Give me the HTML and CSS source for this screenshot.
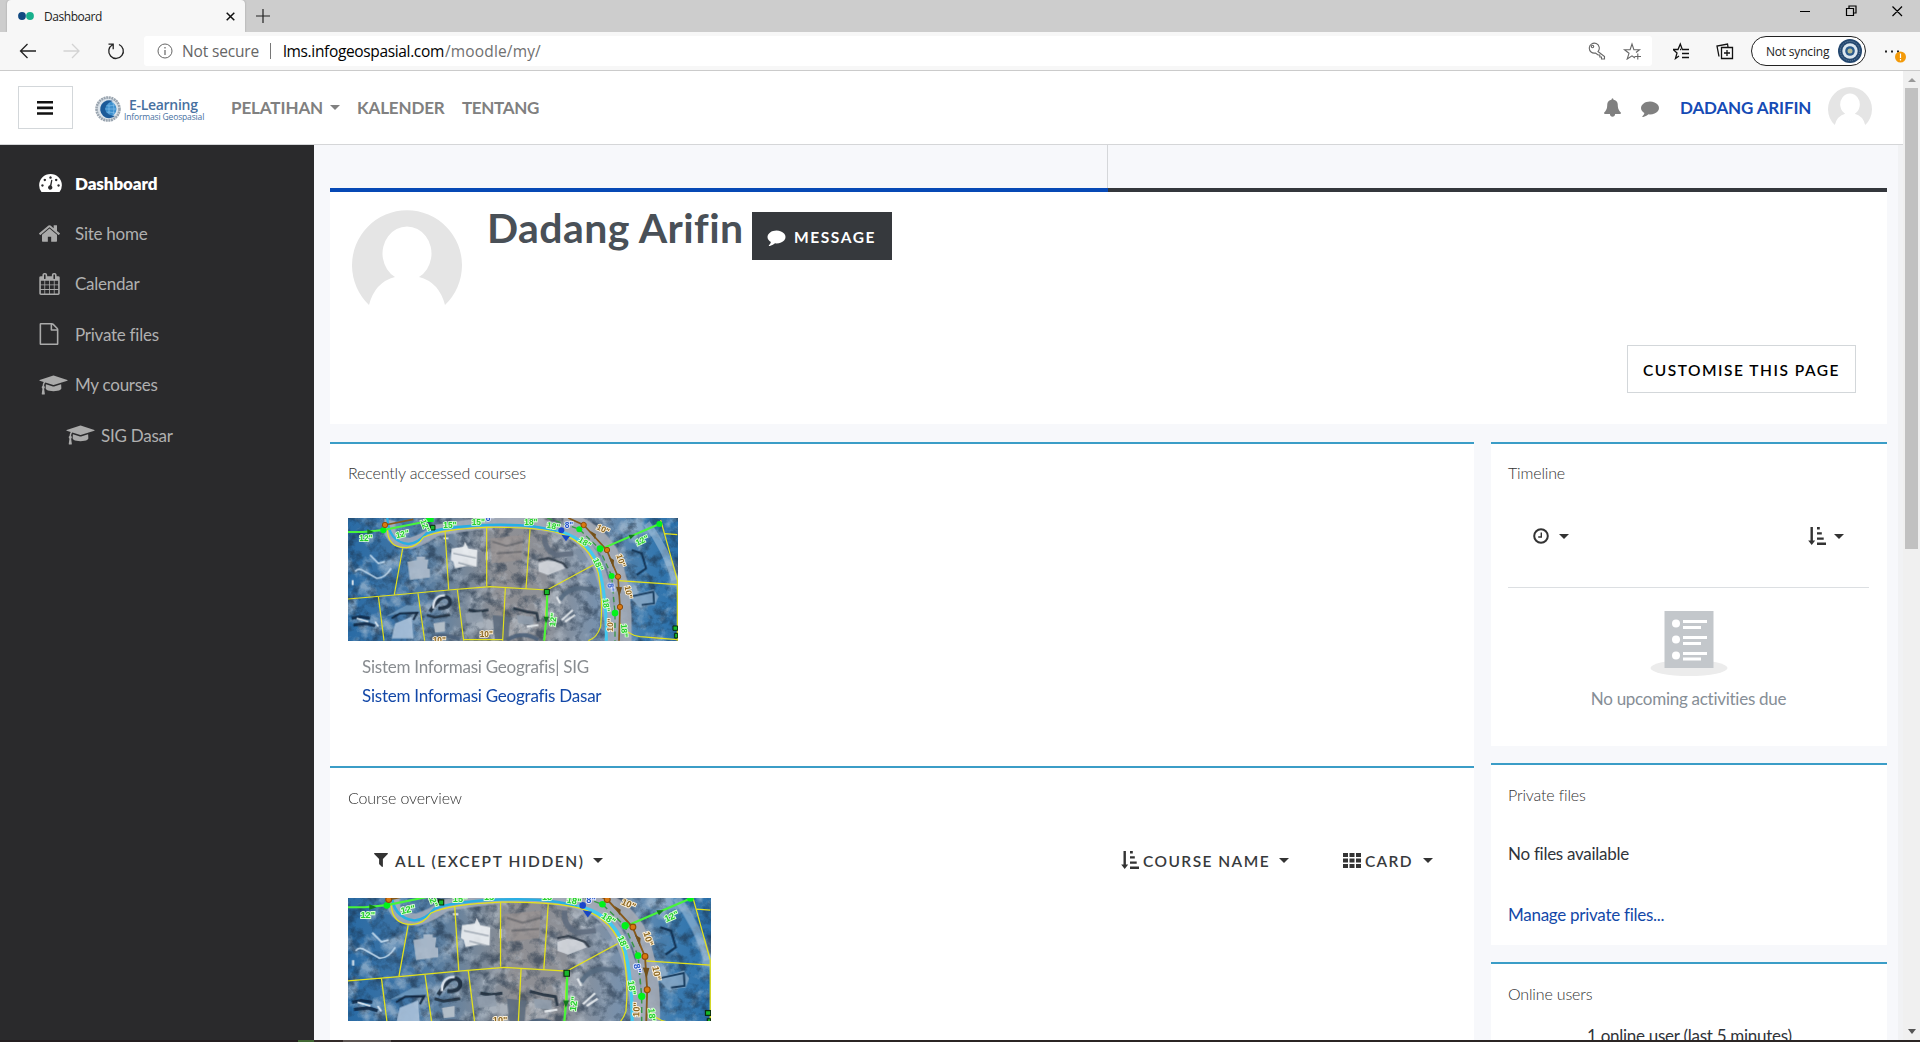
FILE: index.html
```html
<!DOCTYPE html>
<html lang="en">
<head>
<meta charset="utf-8">
<title>Dashboard</title>
<link rel="stylesheet" href="styles.css">
</head>
<body>
<svg class="defs" aria-hidden="true">
  <defs>
    <symbol id="cap" viewBox="0 0 2304 1792"><path d="M1774 836l18 316q4 69-82 128t-235 93.500-323 34.500-323-34.500-235-93.500-82-128l18-316 574 181q22 7 48 7t48-7zm530-324q0 23-22 31l-1120 352q-4 1-10 1t-10-1l-652-206q-43 34-71 111.500t-34 178.500q63 36 63 109 0 69-58 107l58 433q2 14-8 25-9 11-24 11h-192q-15 0-24-11-10-11-8-25l58-433q-58-38-58-107 0-73 65-111 11-207 98-330l-333-104q-22-8-22-31t22-31l1120-352q4-1 10-1t10 1l1120 352q22 8 22 31z"/></symbol>
    <symbol id="comment" viewBox="0 0 1792 1792"><path d="M1792 896q0 174-120 321.500t-326 233-450 85.500q-70 0-145-8-198 175-460 242-49 14-114 22-17 2-30.500-9t-17.500-29v-1q-3-4-.5-12t2-10 4.500-9.500l6-9 7-8.500 8-9q7-8 31-34.500t34.500-38 31-39.500 32.500-51 27-59 26-76q-157-89-247.500-220t-90.500-281q0-130 71-248.500t191-204.500 286-136.500 348-50.500q244 0 450 85.500t326 233 120 321.500z"/></symbol>
    <symbol id="sort" viewBox="0 0 18 18"><path d="M2.500 0h2.400v13.500h2.300L3.700 18 .2 13.500h2.300zM9 0h2.800v2.400H9zM9 5.200h4.800v2.400H9zM9 10.400h6.700v2.400H9zM9 15.600h9V18H9z"/></symbol>
    <symbol id="avatar" viewBox="0 0 110 110"><path d="M17 95A55 55 0 1 1 93 95Q87 72 67 67A24.500 27 0 1 0 43 67Q23 72 17 95z" fill="#e5e5e5"/></symbol>
    <linearGradient id="mapbase" x1="0" x2="1" y1="0" y2="0">
      <stop offset="0" stop-color="#296ba5"/><stop offset=".17" stop-color="#4175a5"/><stop offset=".33" stop-color="#72869b"/><stop offset=".46" stop-color="#8f8f93"/><stop offset=".6" stop-color="#8d9097"/><stop offset=".78" stop-color="#7491b0"/><stop offset=".9" stop-color="#3b7bb0"/><stop offset="1" stop-color="#2a70ab"/>
    </linearGradient>
    <filter id="dark" x="0" y="0" width="100%" height="100%" color-interpolation-filters="sRGB"><feTurbulence type="fractalNoise" baseFrequency=".09" numOctaves="5" seed="7"/><feColorMatrix values="0 0 0 0 .1  0 0 0 0 .17  0 0 0 0 .25  3.200 0 0 0 -1.450"/></filter>
    <filter id="light" x="0" y="0" width="100%" height="100%" color-interpolation-filters="sRGB"><feTurbulence type="fractalNoise" baseFrequency=".05" numOctaves="5" seed="21"/><feColorMatrix values="0 0 0 0 .8  0 0 0 0 .84  0 0 0 0 .88  0 4 0 0 -1.900"/></filter>
    <filter id="soft"><feGaussianBlur stdDeviation="2"/></filter>
    <symbol id="map" viewBox="0 0 330 123">
      <rect width="330" height="123" fill="url(#mapbase)"/>
      <rect width="330" height="123" filter="url(#light)" opacity=".5"/>
      <rect width="330" height="123" filter="url(#dark)" opacity=".55"/>
      <g transform="scale(.333333) translate(-54 -54)" fill="none">
        <g filter="url(#soft)" opacity=".88">
          <path d="M180 60Q165 125 240 130Q280 120 320 90L480 66Q650 62 730 105Q800 150 830 280L850 430" stroke="#a4adbc" stroke-width="34"/>
          <path d="M700 60Q790 80 840 160Q875 240 880 350L880 425" stroke="#a7acb7" stroke-width="50"/>
          <path d="M645 105Q640 150 680 165L730 160" stroke="#5e6c7e" stroke-width="15"/>
          <path d="M950 70Q1010 150 1035 240" stroke="#9cbcd8" stroke-width="22" opacity=".7"/>
          <path d="M690 300Q720 250 790 270" stroke="#566b80" stroke-width="13"/>
          <path d="M300 335Q340 270 360 300Q365 325 325 325" stroke="#182738" stroke-width="11"/>
          <path d="M310 325Q310 285 345 286" stroke="#e9eef5" stroke-width="7"/>
          <path d="M165 350L230 315L270 318L272 340L215 338z" fill="#6f9abf"/>
          <path d="M195 370L245 350L250 415L185 415z" fill="#adc4dc"/>
          <path d="M185 355L210 340L262 338L250 360" stroke="#10233a" stroke-width="6"/>
          <path d="M232 185L260 180V170H285V178L295 178L292 205L300 207V232L240 240z" fill="#b2bfcd"/>
          <path d="M365 145L400 140L405 125L415 145L442 150L440 200L415 197L375 205L370 185L362 180z" fill="#f2f4f6"/>
          <path d="M370 160L438 174M385 188L430 200" stroke="#a9b1ba" stroke-width="4"/>
          <path d="M480 115L580 105L575 180L485 190z" fill="#9b9492" opacity=".8"/>
          <path d="M488 125L530 138L580 125M500 160L575 155" stroke="#5e6064" stroke-width="6" opacity=".7"/>
          <path d="M625 190L650 182L690 185L705 205L655 225L625 215z" fill="#d5d9df"/>
          <path d="M625 180L655 174L700 190L712 205" stroke="#303b48" stroke-width="6"/>
          <path d="M75 215Q85 200 105 215L140 235Q165 235 183 205M120 165L145 190L165 185" stroke="#c8def0" stroke-width="5"/>
          <path d="M65 355L90 350L120 355M70 375L110 370L135 378" stroke="#0c2744" stroke-width="9"/>
          <path d="M80 355L115 365M135 365L145 380" stroke="#eaf2f8" stroke-width="5"/>
          <path d="M890 185L930 175L935 205z" fill="#487fae"/>
          <path d="M905 150L935 160L948 205L920 225" stroke="#102c4b" stroke-width="6"/>
          <path d="M900 290L970 268L985 290L975 315L925 320z" fill="#83a7c6"/>
          <path d="M900 290L970 275L972 310L935 315" stroke="#123252" stroke-width="5"/>
          <path d="M310 370L345 365L345 395L315 398z" fill="#bec6ce"/>
          <path d="M290 345L315 352L360 345M415 330L445 335L475 330M550 325L590 335L620 340L625 365" stroke="#202f3e" stroke-width="8"/>
          <path d="M405 340L455 335L460 365L410 370zM560 345L610 350V375L565 370z" fill="#929fad"/>
          <path d="M487 345L540 350L535 422L495 422z" fill="#5d6c7e"/>
          <path d="M695 360L728 330M705 365L735 345M590 380L625 375M680 290L690 310M340 115H355M68 240V255M470 155V180" stroke="#edf1f4" stroke-width="6"/>
          <path d="M530 420Q580 390 625 420M300 418Q330 395 390 418" stroke="#4c6079" stroke-width="12"/>
        </g>
        <path d="M172 54Q175 125 235 132Q265 130 290 100Q340 80 470 75Q610 70 680 95" stroke="#28aee4" stroke-width="7"/>
        <path d="M680 92Q760 110 795 175Q830 250 829 422" stroke="#43c9f0" stroke-width="9"/>
        <g stroke="#e4e21b" stroke-width="3.500">
          <path d="M172 90Q175 145 230 143Q262 140 280 112Q330 88 470 82Q620 80 690 100Q780 130 805 220Q820 300 812 380Q800 415 775 422"/>
          <path d="M345 93L356 268M470 83V258M600 88L588 266M218 145L193 284M54 297L193 285L356 270L480 260L651 270L790 195M145 288L162 422M264 280L284 422M382 268L401 422M526 264L518 422M651 270L644 422M865 242L1042 254M992 60L1042 240V422M1005 101L1042 104M870 370Q890 405 930 410L1042 419M400 419H518"/>
        </g>
        <path d="M54 96H100L160 90L270 68L304 60M652 275L650 350L642 422M818 145L988 72" stroke="#48f53b" stroke-width="6"/>
        <path d="M652 54L748 88L808 146L845 228L855 340V422" stroke="#389646" stroke-width="4" stroke-dasharray="16 10"/>
        <path d="M165 75L250 58M715 54L761 75L830 150L864 230L870 321L867 422" stroke="#86591a" stroke-width="5"/>
        <path d="M780 92L798 103L795 118zM836 170L852 180L850 204zM858 260L876 262L868 290z" fill="#72501a"/>
        <path d="M112 88L132 96L112 103zM895 104L915 104L902 118zM641 350H657L648 370z" fill="#13791d"/>
        <g fill="#00f31b"><circle cx="160" cy="91" r="9"/><circle cx="748" cy="88" r="9"/><circle cx="810" cy="146" r="10"/><circle cx="845" cy="228" r="9"/><circle cx="855" cy="339" r="10"/><circle cx="988" cy="72" r="9"/><path d="M288 50H311V66H288z"/></g>
        <g fill="#d97810" stroke="#8d4b08" stroke-width="3"><circle cx="165" cy="75" r="8"/><circle cx="761" cy="75" r="8"/><circle cx="831" cy="150" r="8"/><circle cx="864" cy="230" r="8"/><circle cx="870" cy="321" r="8"/></g>
        <g fill="#17b82a" stroke="#092b0b" stroke-width="3"><path d="M301 76H315V90H301zM643 268H658V284H643zM1029 378H1043V391H1029zM1034 400H1043V414H1034z"/></g>
        <circle cx="694" cy="91" r="9" fill="#1945cc"/><path d="M694 104L720 108L708 124z" fill="#1745c4"/>
        <g class="maplabels" fill="#25ce2c" stroke="#d9ffd5" stroke-width="5" paint-order="stroke">
          <text x="88" y="124">12"</text><text x="197" y="112" transform="rotate(-12 210 100)">12"</text><text x="340" y="83">15"</text><text x="425" y="75">15"</text><text x="583" y="75">18"</text><text x="650" y="86" transform="rotate(12 665 80)">18"</text><text x="744" y="132" transform="rotate(32 758 127)">18"</text><text x="785" y="196" transform="rotate(65 800 190)">18"</text><text x="812" y="315" transform="rotate(82 825 309)">18"</text><text x="917" y="132" transform="rotate(-25 931 123)">12"</text><text x="656" y="374" transform="rotate(-82 669 366)">12"</text><text x="865" y="391" transform="rotate(85 879 386)">18"</text><text x="268" y="79" transform="rotate(70 282 72)">12"</text>
          <g fill="#8a6520" stroke="#fff1d7"><text x="799" y="94" transform="rotate(25 814 88)">10"</text><text x="856" y="184" transform="rotate(72 870 177)">10"</text><text x="880" y="277" transform="rotate(80 893 270)">10"</text><text x="828" y="386" transform="rotate(-88 843 380)">10"</text><text x="449" y="412">10"</text><text x="308" y="428">10"</text></g>
          <g fill="#2757c9" stroke="#e4eaff"><text x="704" y="84">8"</text><text x="829" y="270" transform="rotate(80 842 263)">8"</text><text x="467" y="64">8"</text></g>
        </g>
      </g>
    </symbol>
  </defs>
</svg>

<div class="window">
  <header class="tabstrip">
    <div class="tab">
      <svg class="favicon" viewBox="0 0 16 10"><circle cx="4" cy="5" r="3.900" fill="#114a82"/><circle cx="12" cy="5" r="3.900" fill="#17b08c"/></svg>
      <span class="tab-title">Dashboard</span>
      <svg class="tab-close" viewBox="0 0 9 9"><path d="M.7.7l7.600 7.600M8.300.7L.7 8.300" stroke="#111" stroke-width="1.500"/></svg>
    </div>
    <svg class="newtab" viewBox="0 0 14 14"><path d="M7 0v14M0 7h14" stroke="#222" stroke-width="1.200"/></svg>
    <svg class="winbtns" viewBox="0 0 104 12"><path d="M0 6.500h10M46.500 3.500h7v7h-7zM49 3V1h7v7h-2M92.500 1.500l9.500 9.500M102 1.500L92.500 11" fill="none" stroke="#000" stroke-width="1.200"/></svg>
  </header>

  <div class="toolbar">
    <svg class="navbtns" viewBox="0 0 106 20" fill="none" stroke-width="1.300">
      <path d="M17 10H1.500M8.500 3l-7 7 7 7" stroke="#222"/>
      <path d="M44.500 10H60M53 3l7 7-7 7" stroke="#d3d3d3"/>
      <path d="M100 3.500a7.300 7.300 0 1 1-6.500.3M89.500 3.200h4.700v5" stroke="#222"/>
    </svg>
    <div class="address">
      <svg class="info" viewBox="0 0 16 16"><circle cx="8" cy="8" r="7" fill="none" stroke="#666"/><path d="M8 7v5M8 4v1.500" stroke="#666" stroke-width="1.200"/></svg>
      <span class="insecure">Not secure</span><i class="sep"></i>
      <span class="host">lms.infogeospasial.com</span><span class="path">/moodle/my/</span>
      <svg class="addr-icons" viewBox="0 0 54 18" fill="none" stroke="#666" stroke-width="1.100">
        <path d="M10 9.500l6.500 5v2.500h-3v-2h-1.700v-2h-1.700L7.500 11A5 5 0 1 1 10 9.500z"/><circle cx="4.500" cy="4.500" r="1.200"/>
        <path d="M47 16l-3-2.200-4.800 3.200 1.800-5.700-4.500-3.600h5.600L44 2l1.900 5.700h5.600L48 10.500M46.500 14.500H53M49.800 11.500v6"/>
      </svg>
    </div>
    <svg class="fav-icons" viewBox="0 0 62 18" fill="none" stroke="#111" stroke-width="1.300">
      <path d="M6 14l-3.500 2.500L4 11 0 7.500h5L7.300 2l2 5.500H16M9 11.500h7M9 15.500h7M8 7.500h-1"/>
      <path d="M48.500 5.500h11v11h-11zM54 8v6M51 11h6M46 14.500L44 4l10.500-2 .5 3"/>
    </svg>
    <div class="profile"><span>Not syncing</span>
      <svg viewBox="0 0 24 24"><circle cx="12" cy="12" r="12" fill="#23476f"/><circle cx="12" cy="12" r="9.700" fill="none" stroke="#6e8aa5" stroke-dasharray="1 1"/><circle cx="12" cy="12" r="7.700" fill="#dce7ef"/><circle cx="12" cy="12" r="4.800" fill="#2a5b8d"/><circle cx="12" cy="12" r="2.500" fill="#b7bb94"/></svg>
    </div>
    <svg class="more" viewBox="0 0 22 16"><path d="M0 3.500h2v2H0zM6 3.500h2v2H6zM12 3.500h2v2h-2z" fill="#222"/><circle cx="15.500" cy="10" r="5.500" fill="#f39a09"/><path d="M15.500 6.500V11M15.500 12v1.500" stroke="#fff" stroke-width="1.200"/></svg>
  </div>

  <div class="viewport">
    <div class="page">
      <nav class="navbar">
        <button class="menu"><svg viewBox="0 0 16 14"><path d="M0 0h16v2.600H0zM0 5.600h16v2.600H0zM0 11.200h16v2.600H0z" fill="#111"/></svg></button>
        <div class="logo">
          <svg viewBox="0 0 26 26"><circle cx="13" cy="13" r="11.500" fill="#dbe3ea" stroke="#9aa5b0" stroke-width="2.600" stroke-dasharray="2 .6"/><circle cx="14" cy="13" r="7.500" fill="#3d8fcd"/><path d="M6.500 13h15M14 5.500v15M8 9q6 2 12 0M8 17q6-2 12 0M10 6q-2 7 0 14M18 6q2 7 0 14" stroke="#8cc4ec" fill="none" stroke-width=".6"/><path d="M18 5A9 9 0 1 0 20 20Q11 19 10 13Q11 7 18 5z" fill="#1c5a98"/></svg>
          <div><b>E-Learning</b><span>Informasi Geospasial</span></div>
        </div>
        <a class="nl n1">PELATIHAN</a><i class="caret gray"></i>
        <a class="nl n2">KALENDER</a>
        <a class="nl n3">TENTANG</a>
        <svg class="bell" viewBox="64 0 1664 1792"><path d="M1728 1408q0 52-38 90t-90 38h-448q0 106-75 181t-181 75-181-75-75-181h-448q-52 0-90-38t-38-90q50-42 91-88t85-119.500 74.500-158.500 50-206 19.500-260q0-152 117-282.500t307-158.500q-8-19-8-39 0-40 28-68t68-28 68 28 28 68q0 20-8 39 190 28 307 158.500t117 282.500q0 139 19.500 260t50 206 74.500 158.500 85 119.500 91 88z"/></svg>
        <svg class="chat"><use href="#comment"/></svg>
        <a class="user">DADANG ARIFIN</a>
        <svg class="user-pic"><use href="#avatar"/></svg>
      </nav>

      <div class="body">
        <aside class="sidebar">
          <a class="active"><svg class="tacho" viewBox="0 0 24 19"><path fill-rule="evenodd" d="M2.500 19Q0 16 0 12a12 12 0 0 1 24 0q0 4-2.500 7zM12 2.500a1.300 1.300 0 1 0 .01 0zM6 5a1.300 1.300 0 1 0 .01 0zM18 5a1.300 1.300 0 1 0 .01 0zM3.500 10.800a1.300 1.300 0 1 0 .01 0zM20.500 10.800a1.300 1.300 0 1 0 .01 0zM12.800 6L11.500 12a2.300 2.300 0 1 0 1.500.4L14 6.300z"/></svg><span>Dashboard</span></a>
          <a><svg class="home" viewBox="90 250 1612 1290"><path d="M1472 992v480q0 26-19 45t-45 19h-384v-384h-256v384h-384q-26 0-45-19t-19-45v-480q0-1 .5-3t.5-3l575-474 575 474q1 2 1 6zm223-69l-62 74q-8 9-21 11h-3q-13 0-21-7l-692-577-692 577q-12 8-24 7-13-2-21-11l-62-74q-8-10-7-23.500t11-21.500l719-599q32-26 76-26t76 26l244 204v-195q0-14 9-23t23-9h192q14 0 23 9t9 23v408l219 182q10 8 11 21.500t-7 23.500z"/></svg><span>Site home</span></a>
          <a><svg class="cal" viewBox="64 0 1664 1792"><path d="M192 1664h288v-288h-288v288zm352 0h320v-288h-320v288zm-352-352h288v-320h-288v320zm352 0h320v-320h-320v320zm-352-384h288v-288h-288v288zm736 736h320v-288h-320v288zm-384-736h320v-288h-320v288zm768 736h288v-288h-288v288zm-384-352h320v-320h-320v320zm-352-864v-288q0-13-9.500-22.500t-22.500-9.500h-64q-13 0-22.500 9.500t-9.500 22.500v288q0 13 9.500 22.500t22.500 9.500h64q13 0 22.500-9.500t9.500-22.500zm736 864h288v-320h-288v320zm-384-384h320v-288h-320v288zm384 0h288v-288h-288v288zm32-480v-288q0-13-9.500-22.500t-22.500-9.500h-64q-13 0-22.500 9.500t-9.500 22.500v288q0 13 9.500 22.500t22.500 9.500h64q13 0 22.500-9.500t9.500-22.500zm384-64v1280q0 52-38 90t-90 38h-1408q-52 0-90-38t-38-90v-1280q0-52 38-90t90-38h128v-96q0-66 47-113t113-47h64q66 0 113 47t47 113v96h384v-96q0-66 47-113t113-47h64q66 0 113 47t47 113v96h128q52 0 90 38t38 90z"/></svg><span>Calendar</span></a>
          <a><svg class="file" viewBox="128 0 1536 1792"><path d="M1596 380q28 28 48 76t20 88v1152q0 40-28 68t-68 28h-1344q-40 0-68-28t-28-68v-1600q0-40 28-68t68-28h896q40 0 88 20t76 48zm-444-244v376h376q-10-29-22-41l-313-313q-12-12-41-22zm384 1528v-1024h-416q-40 0-68-28t-28-68v-416h-768v1536h1280z"/></svg><span>Private files</span></a>
          <a><svg class="capicon"><use href="#cap"/></svg><span>My courses</span></a>
          <a class="sub"><svg class="capicon"><use href="#cap"/></svg><span>SIG Dasar</span></a>
        </aside>

        <main>
          <div class="lead"></div>
          <section class="profile-card">
            <svg class="big-pic"><use href="#avatar"/></svg>
            <h1>Dadang Arifin</h1>
            <button class="message"><svg><use href="#comment"/></svg><span>MESSAGE</span></button>
            <button class="customise"><span>CUSTOMISE THIS PAGE</span></button>
          </section>
          <div class="columns">
            <div class="left">
              <section class="card recent">
                <h2><span class="t-recent">Recently accessed courses</span></h2>
                <svg class="map1" viewBox="0 0 330 123"><use href="#map" width="330" height="123"/></svg>
                <p class="muted"><span class="t-sig">Sistem Informasi Geografis| SIG</span></p>
                <p class="link"><span class="t-dasar">Sistem Informasi Geografis Dasar</span></p>
              </section>
              <section class="card overview">
                <h2><span class="t-over">Course overview</span></h2>
                <div class="filters">
                  <svg class="funnel" viewBox="190 256 1412 1408"><path d="M1595 295q17 41-14 70l-493 493v742q0 42-39 59-13 5-25 5-27 0-45-19l-256-256q-19-19-19-45v-486l-493-493q-31-29-14-70 17-39 59-39h1280q42 0 59 39z"/></svg><span class="f1">ALL (EXCEPT HIDDEN)</span><i class="caret"></i>
                  <svg class="sort"><use href="#sort"/></svg><span class="f2">COURSE NAME</span><i class="caret"></i>
                  <svg class="grid" viewBox="0 0 18 15"><path d="M0 0h5v4H0zM6.500 0h5v4h-5zM13 0h5v4h-5zM0 5.500h5v4H0zM6.500 5.500h5v4h-5zM13 5.500h5v4h-5zM0 11h5v4H0zM6.500 11h5v4h-5zM13 11h5v4h-5z"/></svg><span class="f3">CARD</span><i class="caret"></i>
                </div>
                <svg class="map2" viewBox="0 0 330 123" preserveAspectRatio="xMidYMid slice"><use href="#map" width="330" height="123"/></svg>
              </section>
            </div>
            <div class="right">
              <section class="card timeline">
                <h2><span class="t-time">Timeline</span></h2>
                <div class="tl-tools">
                  <svg class="clock" viewBox="0 0 16 16"><circle cx="8" cy="8" r="6.800" fill="none" stroke="#333" stroke-width="2"/><path d="M8.300 4.500V9H5.200" fill="none" stroke="#333" stroke-width="1.400"/></svg><i class="caret"></i>
                  <svg class="sort"><use href="#sort"/></svg><i class="caret"></i>
                </div>
                <svg class="empty" viewBox="0 0 78 66"><ellipse cx="39" cy="57" rx="38.500" ry="8" fill="#ececec"/><path d="M14.500 0h49v57h-49z" fill="#c3c7cb"/><g fill="#fff"><circle cx="26" cy="12.500" r="4"/><circle cx="26" cy="28.500" r="4"/><circle cx="26" cy="44.500" r="4"/><path d="M33 9h24v3H33zM33 15h18v3H33zM33 25h24v3H33zM33 31h18v3H33zM33 41h24v3H33zM33 46.500h18v3H33z"/></g></svg>
                <p class="none"><span class="t-none">No upcoming activities due</span></p>
              </section>
              <section class="card files">
                <h2><span class="t-files">Private files</span></h2>
                <p><span class="t-nof">No files available</span></p>
                <p class="link"><span class="t-man">Manage private files...</span></p>
              </section>
              <section class="card online">
                <h2><span class="t-online">Online users</span></h2>
                <p><span class="t-one">1 online user (last 5 minutes)</span></p>
              </section>
            </div>
          </div>
        </main>
      </div>
    </div>
    <div class="scrollbar"><i class="up"></i><div class="thumb"></div><i class="down"></i></div>
  </div>
  <footer class="edge"></footer>
</div>
</body>
</html>
```
FILE: styles.css
```css
* { box-sizing: border-box; }
body { margin: 0; background: #fff; font-family: Lato, "Liberation Sans", sans-serif; overflow: hidden; }
svg { display: block; flex: none; }
span, a, b { white-space: nowrap; }
button { padding: 0; border: 0; background: none; font: inherit; }
p, h1, h2 { margin: 0; font-weight: 400; }
.defs { position: absolute; width: 0; height: 0; }
.window { width: 1920px; height: 1042px; display: flex; flex-direction: column; overflow: hidden; }

/* Browser chrome */
.tabstrip, .toolbar { font-family: "Open Sans", "Noto Sans", sans-serif; display: flex; flex: none; }
.tabstrip { height: 32px; background: #cdcdcd; padding-left: 7px; }
.tab { width: 238px; background: #f7f7f7; border-radius: 4px 4px 0 0; display: flex; align-items: center; padding: 0 10px 0 11px; box-shadow: 0 0 2px #999; }
.favicon { width: 16px; height: 10px; }
.tab-title { font-size: 12px; margin-left: 10px; color: #222; letter-spacing: -.45px; }
.tab-close { width: 9px; height: 9px; margin-left: auto; }
.newtab { width: 14px; height: 14px; margin: 9px 0 0 11px; }
.winbtns { width: 104px; height: 12px; margin: 5px 16px 0 auto; }
.toolbar { height: 39px; background: #f7f7f7; border-bottom: 1px solid #cbcbcb; align-items: center; }
.navbtns { width: 106px; height: 20px; margin-left: 19px; }
.address { width: 1508px; height: 30px; margin-left: 19px; background: #fff; border-radius: 3px; display: flex; align-items: center; font-size: 15.500px; }
.info { width: 16px; height: 16px; margin-left: 13px; }
.insecure { width: 79px; margin-left: 9px; color: #666; letter-spacing: -.15px; }
.sep { width: 1px; height: 16px; background: #777; margin: 0 12px 0 9px; }
.host { width: 163px; color: #000; letter-spacing: -.35px; }
.path { color: #707070; letter-spacing: .15px; margin-left: -1px; }
.addr-icons { width: 54px; height: 18px; margin: 0 10px 0 auto; }
.fav-icons { width: 62px; height: 18px; margin-left: 21px; }
.profile { width: 115px; height: 30px; border: 1px solid #222; border-radius: 15px; margin-left: 16px; display: flex; align-items: center; justify-content: space-between; padding: 0 3px 0 14px; font-size: 12px; background: #fff; color: #222; letter-spacing: -.2px; }
.profile svg { width: 24px; height: 24px; }
.more { width: 22px; height: 16px; margin: 8px 0 0 19px; }

.viewport { flex: 1; min-height: 0; display: flex; }
.page { width: 1903px; display: flex; flex-direction: column; min-height: 0; overflow: hidden; }
.scrollbar { width: 17px; background: #f0f0f0; display: flex; flex-direction: column; align-items: center; }
.up { border: 4px solid transparent; border-top: 0; border-bottom: 4px solid #999; margin-top: 7px; }
.thumb { width: 13px; height: 461px; margin-top: 6px; background: #c1c1c1; }
.down { border: 4px solid transparent; border-bottom: 0; border-top: 5px solid #555; margin: auto 0 6px; }
.edge { height: 2px; background: linear-gradient(90deg, #241e20 0 298px, #426834 298px 314px, #332b29 314px 343px, #5c5452 343px 391px, #2b2524 391px); flex: none; }

/* Site navigation */
.navbar { height: 74px; border-bottom: 1px solid #d5d6d8; background: #fff; display: flex; align-items: center; flex: none; padding: 0 31px 0 18px; }
.menu { width: 55px; height: 43px; border: 1px solid #d3d7da; display: grid; place-items: center; }
.menu svg { width: 16px; height: 14px; margin-right: 1px; }
.logo { width: 110px; margin-left: 22px; display: flex; gap: 3px; align-items: center; font-family: "Open Sans", sans-serif; color: #47709f; padding-top: 3px; }
.logo svg { width: 26px; height: 26px; }
.logo div { display: flex; flex-direction: column; }
.logo b { font-size: 14px; line-height: 15px; font-weight: 600; margin-left: 5px; letter-spacing: -.3px; }
.logo span { font-size: 8.500px; line-height: 9px; letter-spacing: -.15px; }
.nl { font-size: 17px; font-weight: 700; color: #808080; }
.n1 { width: 92px; margin-left: 26px; letter-spacing: -.1px; }
.n2 { width: 87px; margin-left: 17px; letter-spacing: -.15px; }
.n3 { margin-left: 18px; letter-spacing: -.35px; }
.caret { width: 0; height: 0; border: 5px solid transparent; border-top-color: #333; border-bottom: 0; flex: none; }
.navbar .caret { margin-left: 7px; border-top-color: #808080; }
.bell { width: 17px; height: 19px; fill: #808080; margin-left: auto; }
.chat { width: 18px; height: 18px; fill: #808080; margin-left: 20px; }
.user { width: 132px; margin-left: 21px; font-size: 17px; font-weight: 700; color: #154bb5; letter-spacing: -.15px; }
.user-pic { width: 44px; height: 44px; margin: 2px 0 0 16px; }

.body { display: flex; flex: 1; min-height: 0; }
.sidebar { width: 314px; background: #2a2a2c; padding-top: 13px; flex: none; }
.sidebar a { height: 50.400px; display: flex; align-items: center; padding-left: 39px; color: #b0b0b0; font-size: 17px; letter-spacing: -.25px; }
.sidebar svg { fill: #aaa; }
.sidebar span { margin-left: auto; width: 239px; }
.sidebar .active { color: #fff; font-weight: 800; letter-spacing: -.1px; }
.sidebar .active svg { fill: #fff; }
.tacho { width: 23px; height: 18px; }
.home { width: 21px; height: 17px; }
.cal { width: 21px; height: 22px; }
.file { width: 20px; height: 22px; }
.capicon { width: 29px; height: 22px; }
.sidebar .sub { padding-left: 66px; }
.sidebar .sub span { width: 213px; }

main { flex: 1; min-width: 0; background: #f7f8fb; padding: 0 11px 0 16px; border-right: 5px solid #f1f2f4; }
.lead { height: 43px; width: 778px; border-right: 1px solid #d5d7da; }
.profile-card { width: 1557px; height: 236px; background: linear-gradient(90deg, #0749b5 0 778px, #34373c 778px) top / 100% 4px no-repeat #fff; display: grid; grid-template-columns: 135px 265px 140px 1fr; grid-template-rows: 157px 1fr; padding-left: 22px; }
.big-pic { width: 110px; height: 110px; margin-top: 22px; }
h1 { font-size: 41px; line-height: 50px; font-weight: 700; color: #495057; margin-top: 15px; white-space: nowrap; letter-spacing: .4px; }
.message { width: 140px; height: 48px; margin-top: 24px; background: #36393d; color: #fff; display: flex; align-items: center; font-size: 15.500px; font-weight: 700; letter-spacing: 1.600px; padding-top: 2px; }
.message svg { width: 19px; height: 18px; fill: #fff; margin: 0 8px 0 15px; }
.customise { grid-column: 4; grid-row: 2; justify-self: end; margin-right: 31px; width: 229px; height: 48px; border: 1px solid #d3d7da; font-size: 15.500px; font-weight: 600; letter-spacing: 1.500px; color: #000; padding-top: 2px; }
.columns { display: flex; gap: 17px; margin-top: 18px; }
.left { width: 1144px; flex: none; }
.right { width: 396px; flex: none; display: flex; flex-direction: column; gap: 17px; }
.card { background: #fff; border-top: 2px solid #3b9dc7; padding: 0 18px; font-size: 17px; color: #30343a; }
.right .card { padding-left: 17px; }
.overview { height: 300px; }
h2 { font-size: 16px; font-weight: 300; line-height: 20px; padding-top: 19px; color: #333; }
.recent { height: 324px; }
.recent p { line-height: 29px; margin-left: 14px; }
.map1 { width: 330px; height: 123px; margin: 35px 0 11px; }
.map2 { width: 363px; height: 123px; }
.maplabels { font: 700 25px "Liberation Sans", sans-serif; }
.muted { color: #888c90; }
.link { color: #1348a8; }
.overview h2, .files h2, .online h2 { padding-top: 20px; }
.filters { height: 42px; margin: 31px 0 17px; padding-left: 26px; display: flex; align-items: center; font-size: 15.500px; font-weight: 600; letter-spacing: 1.600px; color: #373a3c; fill: #333; }
.filters span { padding-top: 1px; }
.funnel { width: 14px; height: 14px; }
.sort { width: 18px; height: 18px; fill: #333; }
.grid { width: 18px; height: 15px; }
.f1 { width: 189px; margin: 0 9px 0 7px; }
.f2 { width: 127px; margin: 0 9px 0 4px; letter-spacing: 1.450px; }
.f3 { width: 48px; margin: 0 10px 0 4px; letter-spacing: 1.300px; }
.filters .sort { margin-left: 518px; }
.grid { margin-left: 54px; }
.timeline { height: 304px; }
.tl-tools { height: 105px; border-bottom: 1px solid #dcdfe2; display: flex; align-items: center; padding: 2px 25px 0; }
.clock { width: 16px; height: 16px; }
.tl-tools .caret { margin-left: 10px; }
.tl-tools .sort { margin-left: auto; }
.tl-tools .sort + .caret { margin-left: 8px; }
.empty { width: 78px; height: 66px; margin: 23px auto 0; }
.none { text-align: center; margin-top: 11px; line-height: 22px; color: #868e96; }
.files { height: 182px; }
.files p { line-height: 22px; margin-top: 38px; }
.files p + p { margin-top: 39px; }
.online p { margin: 21px 0 0 79px; line-height: 22px; }
.t-sig, .t-dasar { letter-spacing: -.23px; }
.t-recent { letter-spacing: -.15px; }
.t-over, .t-files, .t-time, .t-online { letter-spacing: -.15px; }
.t-none, .t-nof, .t-man, .t-one { letter-spacing: -.27px; }
```
